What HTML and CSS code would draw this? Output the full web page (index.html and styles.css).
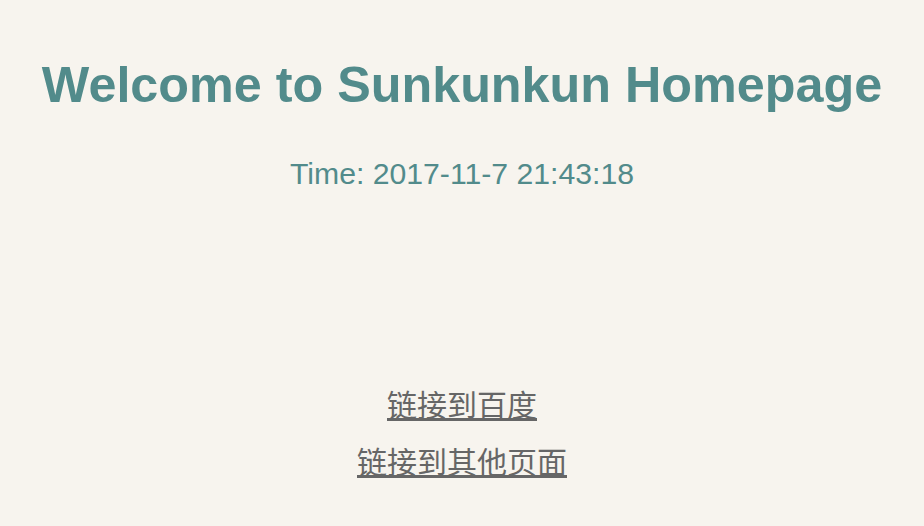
FILE: index.html
```html
<!DOCTYPE html>
<html>
<head>
<meta charset="utf-8">
<link rel="stylesheet" href="styles.css">
</head>
<body>
<div class="page">
  <h1 class="title">Welcome to Sunkunkun Homepage</h1>
  <p class="time">Time: 2017-11-7 21:43:18</p>
  <div class="links">
    <a class="link" href="#">链接到百度</a>
    <a class="link" href="#">链接到其他页面</a>
  </div>
</div>
</body>
</html>
```
FILE: styles.css
```css
html, body {
  margin: 0;
  padding: 0;
  background: #f7f4ee;
}
.page {
  display: flex;
  flex-direction: column;
  align-items: center;
  font-family: "Liberation Sans", Arial, "Noto Sans CJK SC", sans-serif;
}
.title {
  margin: 55px 0 0;
  font-size: 50.3px;
  line-height: 60px;
  font-weight: bold;
  color: #528b8b;
}
.time {
  margin: 41px 0 0;
  font-size: 30.2px;
  line-height: 36px;
  color: #528b8b;
}
.links {
  margin-top: 195px;
  display: flex;
  flex-direction: column;
  align-items: center;
  gap: 19px;
}
.link {
  font-size: 30px;
  line-height: 38px;
  color: #666;
  text-decoration: underline;
  font-family: "Liberation Sans", "Noto Sans CJK SC", sans-serif;
}
```
